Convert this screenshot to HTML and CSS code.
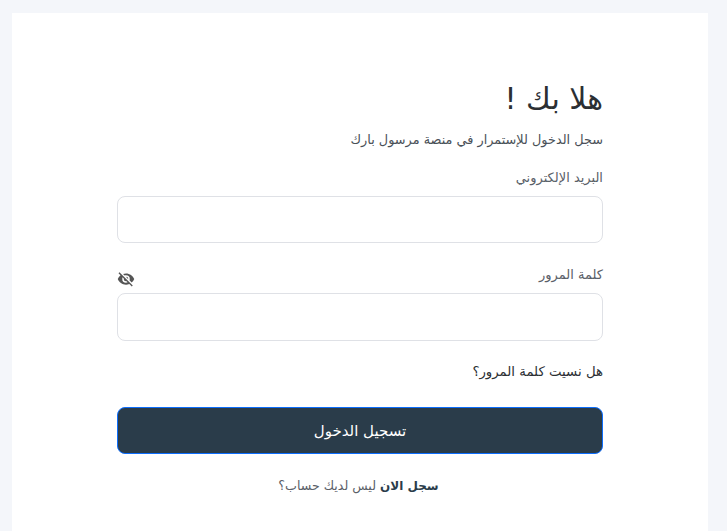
FILE: index.html
```html
<!DOCTYPE html>
<html lang="ar" dir="rtl">
<head>
<meta charset="utf-8">
<title>تسجيل الدخول</title>
<link rel="stylesheet" href="styles.css">
</head>
<body>
<main class="card">
  <form class="form">
    <h1 class="title">هلا بك !</h1>
    <p class="subtitle">سجل الدخول للإستمرار في منصة مرسول بارك</p>
    <div class="field">
      <div class="label-row"><label class="label">البريد الإلكتروني</label></div>
      <input class="input" type="text">
    </div>
    <div class="field field-password">
      <div class="label-row">
        <label class="label">كلمة المرور</label>
        <svg class="eye" viewBox="0 0 24 24" width="18" height="18" aria-hidden="true"><path fill="#555" d="M12 7a5 5 0 0 1 5 5c0 .65-.13 1.26-.36 1.83l2.92 2.92A11.8 11.8 0 0 0 23 12c-1.73-4.39-6-7.5-11-7.5-1.4 0-2.74.25-3.98.7l2.16 2.16C10.74 7.13 11.35 7 12 7zM2 4.27l2.28 2.28.46.46A11.8 11.8 0 0 0 1 12c1.73 4.39 6 7.5 11 7.5 1.55 0 3.03-.3 4.38-.84l.42.42L19.73 22 21 20.73 3.27 3 2 4.27zM7.53 9.8l1.55 1.55c-.05.21-.08.43-.08.65a3 3 0 0 0 3 3c.22 0 .44-.03.65-.08l1.55 1.55c-.67.33-1.41.53-2.2.53a5 5 0 0 1-5-5c0-.79.2-1.53.53-2.2zm4.31-.78 3.15 3.15.02-.16a3 3 0 0 0-3-3l-.17.01z"/></svg>
      </div>
      <input class="input" type="password">
    </div>
    <a class="forgot" href="#">هل نسيت كلمة المرور؟</a>
    <button class="submit" type="button">تسجيل الدخول</button>
    <p class="signup"><a class="signup-link" href="#">سجل الان</a> ليس لديك حساب؟</p>
  </form>
</main>
</body>
</html>
```
FILE: styles.css
```css
* { box-sizing: border-box; }
html, body { height: 100%; }
body {
  margin: 0;
  padding: 13px 19px 0 12px;
  background: #f4f6fa;
  font-family: "DejaVu Sans", "Noto Sans", sans-serif;
  overflow: hidden;
}
.card {
  background: #fff;
  height: 100%;
  padding: 66px 105px 0;
}
.form { display: flex; flex-direction: column; }
.title {
  margin: 0;
  font-size: 30px;
  line-height: 40px;
  font-weight: 400;
  color: #2b2f33;
}
.subtitle {
  margin: 11px 0 0;
  font-size: 12.85px;
  line-height: 20px;
  color: #495057;
}
.field { margin-top: 18px; }
.field-password { margin-top: 22px; }
.label-row {
  display: flex;
  justify-content: space-between;
  align-items: flex-start;
  height: 28px;
}
.label { font-size: 13px; line-height: 20px; color: #5a6068; }
.eye { margin-top: 5px; }
.input {
  display: block;
  width: 100%;
  height: 47px;
  border: 1px solid #dfe1e6;
  border-radius: 8px;
  background: #fff;
  outline: none;
}
.field-password .input { height: 48px; }
.forgot {
  margin-top: 21px;
  font-size: 13.3px;
  line-height: 20px;
  color: #2b2f33;
  text-decoration: none;
}
.submit {
  margin-top: 25px;
  height: 47px;
  background: #2a3c4a;
  border: 1px solid #0d6efd;
  border-radius: 8px;
  color: #fff;
  font: inherit;
  font-size: 15px;
}
.signup {
  margin: 22px 0 0;
  padding-right: 3px;
  text-align: center;
  font-size: 12.6px;
  line-height: 20px;
  color: #5a6068;
}
.signup-link { font-size: 12px; font-weight: 700; color: #2a3c4a; text-decoration: none; }
```
